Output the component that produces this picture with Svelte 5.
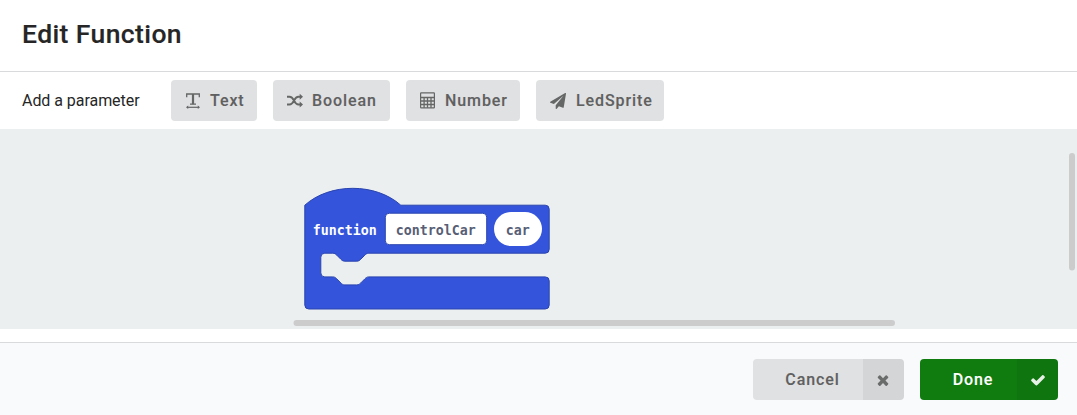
<script>
  const params = [
    { label: 'Text', icon: 'text', width: 86 },
    { label: 'Boolean', icon: 'random', width: 117 },
    { label: 'Number', icon: 'calculator', width: 114 },
    { label: 'LedSprite', icon: 'plane', width: 128 }
  ];
</script>

<div class="modal">
  <header><h1>Edit Function</h1></header>

  <div class="toolbar">
    <span class="label">Add a parameter</span>
    {#each params as p}
      <button class="param" style="width: {p.width}px">
        {#if p.icon === 'text'}
          <svg width="16" height="18" viewBox="0 0 16 18" fill="none" stroke="currentColor">
            <path d="M1.700 5.200V2H14.300V5.200M5 12.200H11" stroke-width="1.300" />
            <path d="M8 2V12.200" stroke-width="2.200" />
            <path d="M2 15.300H14" stroke-width="1.200" />
            <path d="M1 15.300L3.200 13.600V17ZM15 15.300L12.800 13.600V17Z" fill="currentColor" stroke="none" />
          </svg>
        {:else if p.icon === 'random'}
          <svg width="16" height="16" viewBox="0 0 16 16" fill="none" stroke="currentColor">
            <path d="M0 3.700H2.500C7.500 3.700 6.500 11.500 11.500 11.500H13M0 11.500H2.500C7.500 11.500 6.500 3.700 11.500 3.700H13" stroke-width="2" />
            <path d="M12.700 0.700L16 3.700L12.700 6.700ZM12.700 8.500L16 11.500L12.700 14.500Z" fill="currentColor" stroke="none" />
          </svg>
        {:else if p.icon === 'calculator'}
          <svg width="16" height="18" viewBox="0 0 16 18" fill="none" stroke="currentColor">
            <rect x="0.600" y="0.800" width="13.800" height="15" rx="0.600" stroke-width="1.200" />
            <path d="M1 5.500H14.600M1 9H14.600M1 12.500H14.600M4.100 5.500V15.800M7.500 5.500V15.800M11 5.500V15.800" stroke-width="1.300" />
          </svg>
        {:else}
          <svg width="16" height="16" viewBox="0 0 1792 1792" fill="currentColor">
            <path d="M1764 11q33 24 27 64l-256 1536q-5 29-32 45-14 8-31 8-11 0-24-5l-453-185-242 295q-18 23-49 23-13 0-22-4-19-7-30.5-23.5t-11.5-36.5v-349l864-1059-1069 925-395-162q-37-14-40-55-2-40 32-59l1664-960q15-9 32-9 20 0 36 11z" />
          </svg>
        {/if}
        <span>{p.label}</span>
      </button>
    {/each}
  </div>

  <div class="workspace">
    <svg width="1077" height="200" viewBox="0 129 1077 200">
      <path
        class="block"
        d="M304.800 205.200c25 -22.500 71 -22.500 96 0H545.200a4 4 0 0 1 4 4V249.200a4 4 0 0 1 -4 4H368.800c-2 0 -3 1 -4 2l-4 4c-1 1 -2 2 -4 2h-12c-2 0 -3 -1 -4 -2l-4 -4c-1 -1 -2 -2 -4 -2h-8a4 4 0 0 0 -4 4v15.700a4 4 0 0 0 4 4h8c2 0 3 1 4 2l4 4c1 1 2 2 4 2h12c2 0 3 -1 4 -2l4 -4c1 -1 2 -2 4 -2H545.200a4 4 0 0 1 4 4V305a4 4 0 0 1 -4 4H308.800a4 4 0 0 1 -4 -4Z"
      />
      <rect class="name" x="385.300" y="213.200" width="101.400" height="31.500" rx="4" />
      <rect x="494" y="212" width="48" height="34" rx="17" fill="#fff" />
      <text x="312.800" y="234.500" fill="#fff" textLength="64" lengthAdjust="spacingAndGlyphs">function</text>
      <text x="395.800" y="234.500" textLength="80" lengthAdjust="spacingAndGlyphs">controlCar</text>
      <text x="505.800" y="234.500" textLength="24" lengthAdjust="spacingAndGlyphs">car</text>
      <rect class="bar" x="293.500" y="320" width="601.500" height="6" rx="3" />
      <rect class="bar" x="1069" y="153" width="6" height="117.500" rx="3" />
    </svg>
  </div>

  <footer>
    <button class="action cancel">
      <span>Cancel</span>
      <i>
        <svg width="16" height="16" viewBox="0 0 1792 1792" fill="currentColor">
          <path d="M1490 1322q0 40-28 68l-136 136q-28 28-68 28t-68-28l-294-294-294 294q-28 28-68 28t-68-28l-136-136q-28-28-28-68t28-68l294-294-294-294q-28-28-28-68t28-68l136-136q28-28 68-28t68 28l294 294 294-294q28-28 68-28t68 28l136 136q28 28 28 68t-28 68l-294 294 294 294q28 28 28 68z" />
        </svg>
      </i>
    </button>
    <button class="action done">
      <span>Done</span>
      <i>
        <svg width="16" height="16" viewBox="0 0 1792 1792" fill="currentColor">
          <path d="M1671 566q0 40-28 68l-724 724-136 136q-28 28-68 28t-68-28l-136-136-362-362q-28-28-28-68t28-68l136-136q28-28 68-28t68 28l294 295 656-657q28-28 68-28t68 28l136 136q28 28 28 68z" />
        </svg>
      </i>
    </button>
  </footer>
</div>

<style>
  .modal {
    display: flex;
    flex-direction: column;
    height: 415px;
    background: #fff;
    color: #262626;
    font-family: Roboto, sans-serif;
    overflow: hidden;
  }
  header {
    box-sizing: border-box;
    height: 72px;
    padding: 17px 22px;
    border-bottom: 1px solid #d9dadb;
  }
  h1 {
    margin: 0;
    font-size: 26.5px;
    line-height: 33px;
    font-weight: 500;
    letter-spacing: 0.4px;
    -webkit-text-stroke: 0.15px currentColor;
  }
  .toolbar {
    display: flex;
    align-items: center;
    height: 57px;
    padding-left: 22px;
    gap: 16px;
  }
  .label {
    width: 133px;
    font-size: 16px;
    letter-spacing: -0.05px;
    white-space: nowrap;
  }
  button {
    display: flex;
    box-sizing: border-box;
    height: 41px;
    padding: 0;
    border: 0;
    border-radius: 4px;
    overflow: hidden;
    align-items: center;
    background: #e0e1e2;
    color: #5f6060;
    font: 500 16px Roboto, sans-serif;
    letter-spacing: 0.9px;
    -webkit-text-stroke: 0.1px currentColor;
  }
  .param {
    padding-left: 14px;
    gap: 9px;
    white-space: nowrap;
  }
  .param:last-child {
    gap: 10px;
  }
  svg {
    display: block;
    flex: none;
  }
  .param svg {
    opacity: 0.95;
  }
  .workspace {
    height: 200px;
    background: #ebeff0;
  }
  .block {
    fill: #3455db;
    stroke: #2a44af;
  }
  .name {
    fill: #fff;
    stroke: #2a44af;
  }
  .bar {
    fill: #ccc;
  }
  text {
    font: bold 14.500px 'DejaVu Sans Mono', monospace;
    fill: #575e75;
  }
  text[fill] {
    fill: #fff;
  }
  footer {
    box-sizing: border-box;
    display: flex;
    justify-content: flex-end;
    gap: 16px;
    height: 73px;
    margin-top: 13px;
    padding: 16px 19px 0 0;
    border-top: 1px solid #d9dadb;
    background: #f9fafc;
  }
  .action span {
    flex: 1;
    text-align: center;
    padding-left: 9px;
  }
  .action i {
    display: flex;
    align-items: center;
    justify-content: center;
    width: 41px;
    height: 41px;
    background: rgba(0, 0, 0, 0.05);
  }
  .action svg {
    opacity: 0.9;
  }
  .cancel svg {
    margin-right: 1px;
  }
  .cancel {
    width: 151px;
  }
  .done {
    width: 138px;
    background: #107c10;
    color: #fff;
  }
</style>
